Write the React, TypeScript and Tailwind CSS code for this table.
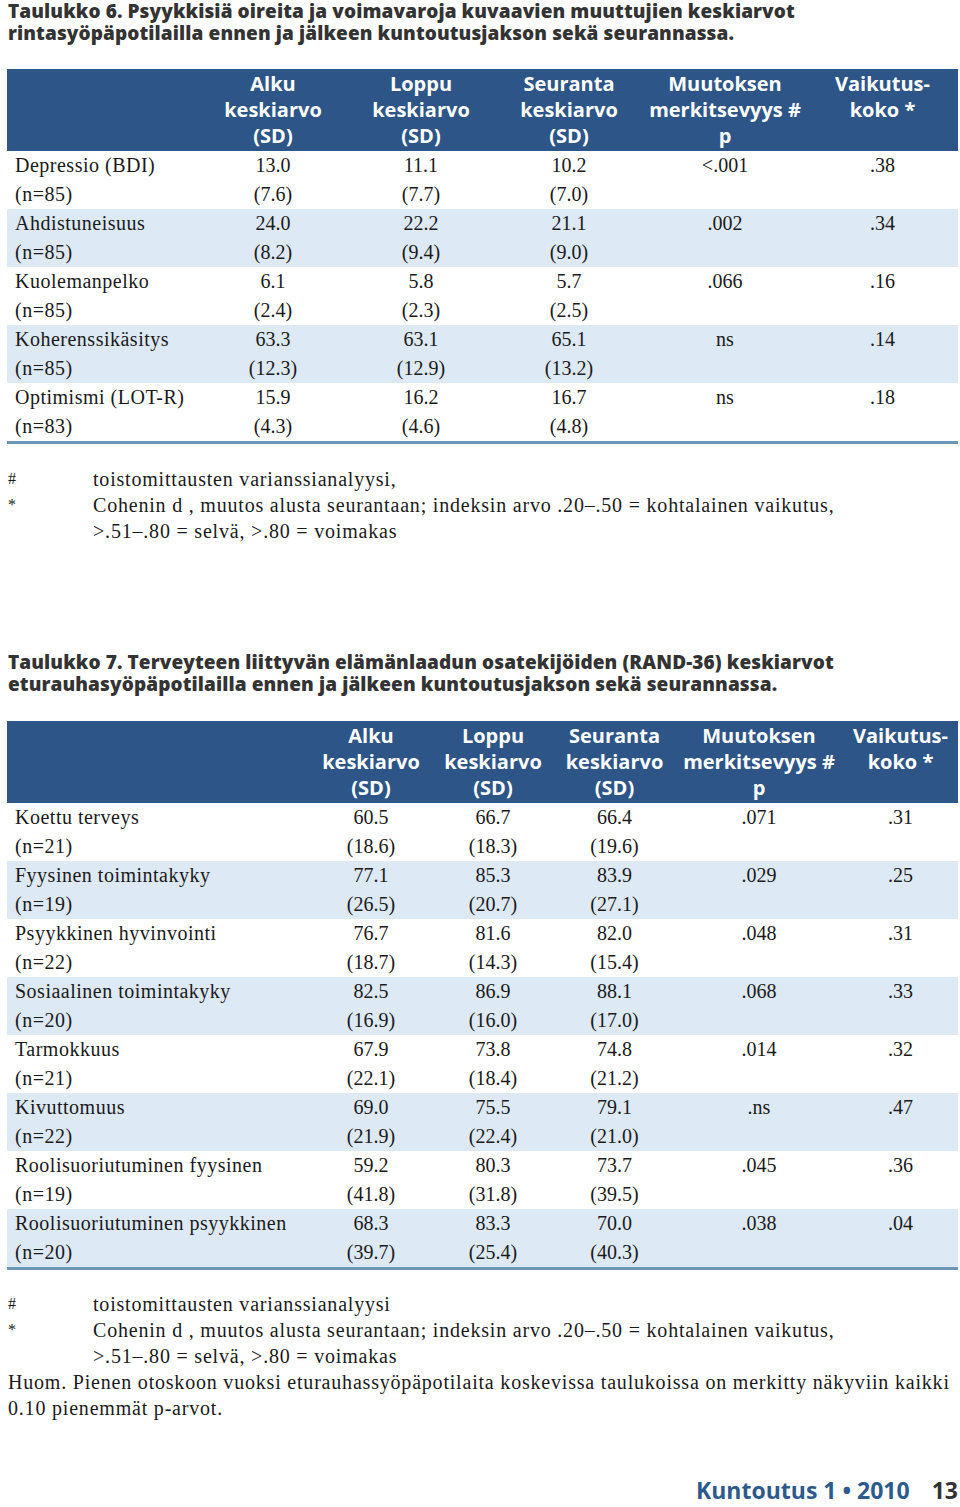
const sans = "font-['Open_Sans',sans-serif]";
const serif = "font-['Liberation_Serif',serif]";

type Row = { label: string; n: string; vals: string[]; sds: string[]; p: string; d: string };

const table6: Row[] = [
    { label: 'Depressio (BDI)', n: '(n=85)', vals: ['13.0', '11.1', '10.2'], sds: ['(7.6)', '(7.7)', '(7.0)'], p: '<.001', d: '.38' },
    { label: 'Ahdistuneisuus', n: '(n=85)', vals: ['24.0', '22.2', '21.1'], sds: ['(8.2)', '(9.4)', '(9.0)'], p: '.002', d: '.34' },
    { label: 'Kuolemanpelko', n: '(n=85)', vals: ['6.1', '5.8', '5.7'], sds: ['(2.4)', '(2.3)', '(2.5)'], p: '.066', d: '.16' },
    { label: 'Koherenssikäsitys', n: '(n=85)', vals: ['63.3', '63.1', '65.1'], sds: ['(12.3)', '(12.9)', '(13.2)'], p: 'ns', d: '.14' },
    { label: 'Optimismi (LOT-R)', n: '(n=83)', vals: ['15.9', '16.2', '16.7'], sds: ['(4.3)', '(4.6)', '(4.8)'], p: 'ns', d: '.18' },
];

const table7: Row[] = [
    { label: 'Koettu terveys', n: '(n=21)', vals: ['60.5', '66.7', '66.4'], sds: ['(18.6)', '(18.3)', '(19.6)'], p: '.071', d: '.31' },
    { label: 'Fyysinen toimintakyky', n: '(n=19)', vals: ['77.1', '85.3', '83.9'], sds: ['(26.5)', '(20.7)', '(27.1)'], p: '.029', d: '.25' },
    { label: 'Psyykkinen hyvinvointi', n: '(n=22)', vals: ['76.7', '81.6', '82.0'], sds: ['(18.7)', '(14.3)', '(15.4)'], p: '.048', d: '.31' },
    { label: 'Sosiaalinen toimintakyky', n: '(n=20)', vals: ['82.5', '86.9', '88.1'], sds: ['(16.9)', '(16.0)', '(17.0)'], p: '.068', d: '.33' },
    { label: 'Tarmokkuus', n: '(n=21)', vals: ['67.9', '73.8', '74.8'], sds: ['(22.1)', '(18.4)', '(21.2)'], p: '.014', d: '.32' },
    { label: 'Kivuttomuus', n: '(n=22)', vals: ['69.0', '75.5', '79.1'], sds: ['(21.9)', '(22.4)', '(21.0)'], p: '.ns', d: '.47' },
    { label: 'Roolisuoriutuminen fyysinen', n: '(n=19)', vals: ['59.2', '80.3', '73.7'], sds: ['(41.8)', '(31.8)', '(39.5)'], p: '.045', d: '.36' },
    { label: 'Roolisuoriutuminen psyykkinen', n: '(n=20)', vals: ['68.3', '83.3', '70.0'], sds: ['(39.7)', '(25.4)', '(40.3)'], p: '.038', d: '.04' },
];

function DataTable({ rows, cols }: { rows: Row[]; cols: string }) {
    return (
        <div className="w-[951px]">
            {/* Header */}
            <div className={`grid ${cols} bg-[#2d5588] text-white ${sans} font-bold text-[20px] leading-[26px] py-[2px]`}>
                <div />
                <div className="text-center">Alku<br />keskiarvo<br />(SD)</div>
                <div className="text-center">Loppu<br />keskiarvo<br />(SD)</div>
                <div className="text-center">Seuranta<br />keskiarvo<br />(SD)</div>
                <div className="text-center">Muutoksen<br />merkitsevyys #<br />p</div>
                <div className="text-center">Vaikutus-<br />koko *</div>
            </div>

            {/* Body */}
            <div className={`${serif} text-[20px] leading-[29px] text-[#1a1a1a] border-b-[3px] border-[#6b97b6]`}>
                {rows.map((r, i) => (
                    <div key={r.label} className={`grid ${cols} ${i % 2 === 1 ? 'bg-[#dde9f5]' : 'bg-white'}`}>
                        <div className="pl-2 whitespace-nowrap tracking-[0.5px]">{r.label}<br />{r.n}</div>
                        {r.vals.map((v, j) => (
                            <div key={j} className="text-center">{v}<br />{r.sds[j]}</div>
                        ))}
                        <div className="text-center">{r.p}</div>
                        <div className="text-center">{r.d}</div>
                    </div>
                ))}
            </div>
        </div>
    );
}

function Notes({ comma }: { comma: boolean }) {
    return (
        <div className={`${serif} text-[20px] leading-[26px] text-[#1a1a1a]`}>
            <div className="flex">
                <span className="w-[85px] shrink-0 text-[16px]">#</span>
                <span className="tracking-[0.8px]">toistomittausten varianssianalyysi{comma ? ',' : ''}</span>
            </div>
            <div className="flex">
                <span className="w-[85px] shrink-0 text-[16px]">*</span>
                <span className="tracking-[0.8px]">Cohenin d , muutos alusta seurantaan; indeksin arvo .20–.50 = kohtalainen vaikutus,<br />&gt;.51–.80 = selvä, &gt;.80 = voimakas</span>
            </div>
        </div>
    );
}

export default function App() {
    return (
        <div className="w-[960px] h-[1507px] bg-white px-[7px] relative">
            <h2 className={`${sans} font-extrabold text-[19px] tracking-[0.1px] leading-[22px] text-[#333] pl-px`}>
                Taulukko 6. Psyykkisiä oireita ja voimavaroja kuvaavien muuttujien keskiarvot<br />
                rintasyöpäpotilailla ennen ja jälkeen kuntoutusjakson sekä seurannassa.
            </h2>

            <div className="mt-[25px]">
                <DataTable rows={table6} cols="grid-cols-[192px_148px_148px_148px_164px_1fr]" />
            </div>

            <div className="mt-[22px] pl-px">
                <Notes comma />
            </div>

            <h2 className={`${sans} font-extrabold text-[19px] tracking-[0.1px] leading-[22px] text-[#333] pl-px mt-[107px]`}>
                Taulukko 7. Terveyteen liittyvän elämänlaadun osatekijöiden (RAND-36) keskiarvot<br />
                eturauhasyöpäpotilailla ennen ja jälkeen kuntoutusjakson sekä seurannassa.
            </h2>

            <div className="mt-[26px]">
                <DataTable rows={table7} cols="grid-cols-[303px_122px_122px_121px_168px_1fr]" />
            </div>

            <div className="mt-[21px] pl-px">
                <Notes comma={false} />
                <p className={`${serif} text-[20px] leading-[26px] tracking-[0.8px] text-[#1a1a1a]`}>
                    Huom. Pienen otoskoon vuoksi eturauhassyöpäpotilaita koskevissa taulukoissa on merkitty näkyviin kaikki<br />
                    0.10 pienemmät p-arvot.
                </p>
            </div>

            {/* Footer */}
            <div className={`absolute right-[2px] bottom-0 flex items-baseline gap-[22px] ${sans} font-bold text-[23px]`}>
                <span className="text-[#2d5a8c]">Kuntoutus 1 • 2010</span>
                <span className="text-[#333]">13</span>
            </div>
        </div>
    );
}
